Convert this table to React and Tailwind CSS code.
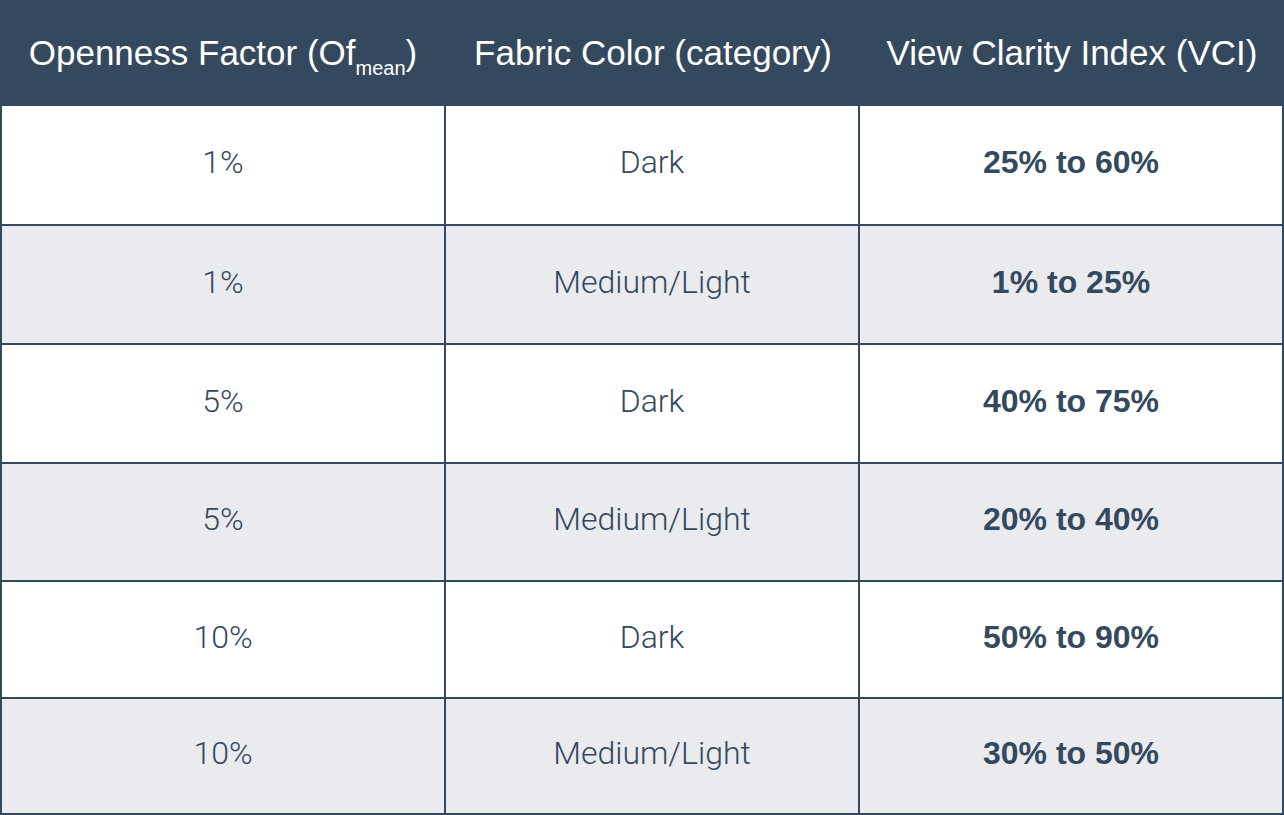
import React from "react";

const rows = [
  ["1%", "Dark", "25% to 60%"],
  ["1%", "Medium/Light", "1% to 25%"],
  ["5%", "Dark", "40% to 75%"],
  ["5%", "Medium/Light", "20% to 40%"],
  ["10%", "Dark", "50% to 90%"],
  ["10%", "Medium/Light", "30% to 50%"],
];

export default function App() {
  return (
    <div className="w-[1284px] h-[815px] flex flex-col bg-white">
      <div className="h-[106px] shrink-0 bg-[#34495e] grid grid-cols-[446px_414px_1fr] text-white text-[35px] font-['Liberation_Sans',Arial,sans-serif]">
        <div className="flex items-center justify-center">
          <span>
            Openness Factor (Of
            <sub className="text-[20px] relative top-[10px] align-baseline">mean</sub>)
          </span>
        </div>
        <div className="flex items-center justify-center">Fabric Color (category)</div>
        <div className="flex items-center justify-center">View Clarity Index (VCI)</div>
      </div>
      <div className="flex-1 grid grid-rows-[118px_119px_119px_118px_117px_1fr] border-x-2 border-b-2 border-[#34495e]">
        {rows.map((r, i) => (
          <div
            key={i}
            className={
              "grid grid-cols-[444px_414px_1fr] text-[#34495e] text-[32px] " +
              (i > 0 ? "border-t-2 border-[#34495e] " : "") +
              (i % 2 === 1 ? "bg-[#e9ebef]" : "bg-white")
            }
          >
            <div className="flex items-center justify-center border-r-2 border-[#34495e] font-['Roboto',sans-serif] font-light pb-[6px]">
              {r[0]}
            </div>
            <div className="flex items-center justify-center border-r-2 border-[#34495e] font-['Roboto',sans-serif] font-light pb-[6px]">
              {r[1]}
            </div>
            <div className="flex items-center justify-center font-['Liberation_Sans',Arial,sans-serif] font-bold pb-[6px]">
              {r[2]}
            </div>
          </div>
        ))}
      </div>
    </div>
  );
}
